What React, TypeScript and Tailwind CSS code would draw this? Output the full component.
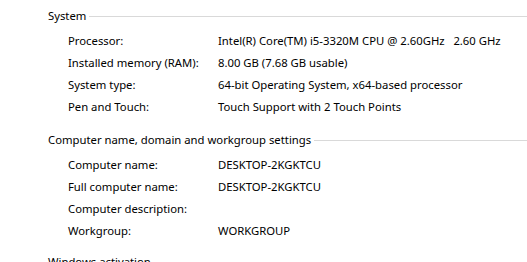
import React from "react";

const sys: [string, string][] = [
  ["Processor:", "Intel(R) Core(TM) i5-3320M CPU @ 2.60GHz   2.60 GHz"],
  ["Installed memory (RAM):", "8.00 GB (7.68 GB usable)"],
  ["System type:", "64-bit Operating System, x64-based processor"],
  ["Pen and Touch:", "Touch Support with 2 Touch Points"],
];

const comp: [string, string][] = [
  ["Computer name:", "DESKTOP-2KGKTCU"],
  ["Full computer name:", "DESKTOP-2KGKTCU"],
  ["Computer description:", ""],
  ["Workgroup:", "WORKGROUP"],
];

function Header({ title }: { title: string }) {
  return (
    <div className="flex items-center h-[22px]">
      <span className="whitespace-nowrap">{title}</span>
      <div className="flex-1 h-px bg-[#d9d9d9] ml-[3px] mt-px" />
    </div>
  );
}

function Rows({ rows }: { rows: [string, string][] }) {
  return (
    <div className="pl-[20px] flex flex-col">
      {rows.map(([k, v]) => (
        <div key={k} className="flex h-[22px] items-center">
          <span className="w-[150px] whitespace-nowrap">{k}</span>
          <span className="whitespace-pre">{v}</span>
        </div>
      ))}
    </div>
  );
}

export default function App() {
  return (
    <div
      className="w-[527px] h-[262px] overflow-hidden bg-white text-black text-[11.3px] pl-[48px] pt-[5px]"
      style={{ fontFamily: '"Noto Sans", "Open Sans", sans-serif' }}
    >
      <Header title="System" />
      <div className="mt-[3px]">
        <Rows rows={sys} />
      </div>
      <div className="mt-[11px]">
        <Header title="Computer name, domain and workgroup settings" />
      </div>
      <div className="mt-[3px]">
        <Rows rows={comp} />
      </div>
      <div className="mt-[9px]">
        <Header title="Windows activation" />
      </div>
    </div>
  );
}
